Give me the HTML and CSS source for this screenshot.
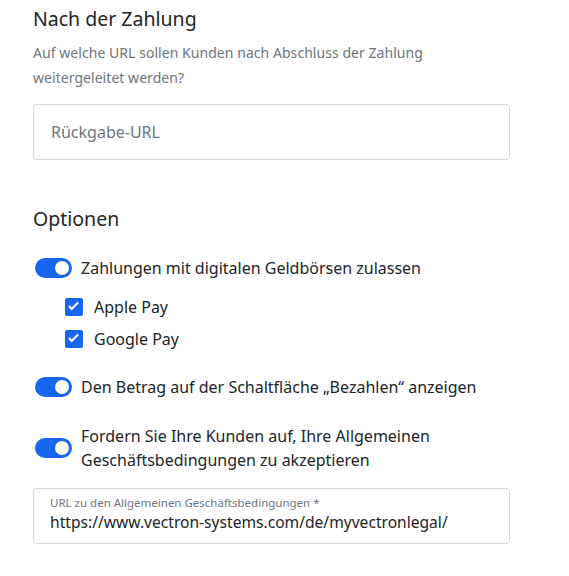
FILE: index.html
```html
<!DOCTYPE html>
<html>
  <head>
    <meta charset="UTF-8" />
    <meta name="viewport" content="width=device-width, initial-scale=1.0" />
    <title>Nach der Zahlung</title>
    <link rel="stylesheet" href="styles.css">
  </head>
  <body>
    <div class="settings">
      <h2 class="section-title">Nach der Zahlung</h2>
      <p class="section-text">Auf welche URL sollen Kunden nach Abschluss der Zahlung weitergeleitet werden?</p>
      <input class="text-field" type="text" placeholder="Rückgabe-URL" />

      <h2 class="section-title options-title">Optionen</h2>

      <label class="switch-row">
        <input type="checkbox" class="switch" checked />
        <span>Zahlungen mit digitalen Geldbörsen zulassen</span>
      </label>
      <div class="check-list">
        <label class="check-row">
          <input type="checkbox" class="check" checked />
          <span>Apple Pay</span>
        </label>
        <label class="check-row">
          <input type="checkbox" class="check" checked />
          <span>Google Pay</span>
        </label>
      </div>

      <label class="switch-row">
        <input type="checkbox" class="switch" checked />
        <span>Den Betrag auf der Schaltfläche „Bezahlen“ anzeigen</span>
      </label>

      <label class="switch-row">
        <input type="checkbox" class="switch" checked />
        <span>Fordern Sie Ihre Kunden auf, Ihre Allgemeinen Geschäftsbedingungen zu akzeptieren</span>
      </label>

      <div class="float-field">
        <label for="terms">URL zu den Allgemeinen Geschäftsbedingungen *</label>
        <input id="terms" type="text" value="https://www.vectron-systems.com/de/myvectronlegal/" />
      </div>
    </div>
  </body>
</html>
```

FILE: styles.css
```css
*,
*::after,
*::before {
  box-sizing: border-box;
}
body {
  margin: 0;
  font-family: 'Noto Sans', sans-serif;
  color: #212529;
  background-color: #fff;
}
.settings {
  width: 477px;
  margin-left: 33px;
  padding-top: 4px;
}
.section-title {
  margin: 0;
  font-size: 19.5px;
  font-weight: 400;
  line-height: 30px;
}
.section-text {
  margin: 6px 0 14px;
  font-size: 14px;
  line-height: 25px;
  letter-spacing: 0.05px;
  color: #6c757d;
}
/* Eingabefeld mit Platzhalter */
.text-field {
  display: block;
  width: 100%;
  height: 56px;
  padding: 0 17px;
  font-family: inherit;
  font-size: 16px;
  color: #212529;
  border: 1px solid #d6d6d6;
  border-radius: 4px;
  outline: none;
}
.text-field::placeholder {
  color: #6c757d;
}
.options-title {
  margin-top: 44px;
  margin-bottom: 22px;
}
/* Schalter */
.switch-row {
  display: flex;
  align-items: center;
  gap: 9px;
  margin-bottom: 25px;
  font-size: 16px;
  line-height: 24px;
}
.switch {
  appearance: none;
  flex: none;
  position: relative;
  width: 37px;
  height: 20px;
  margin: 0 0 0 2px;
  border-radius: 10px;
  background-color: #1766f2;
  cursor: pointer;
}
.switch::after {
  content: '';
  position: absolute;
  top: 3px;
  right: 3px;
  width: 14px;
  height: 14px;
  border-radius: 50%;
  background-color: #fff;
}
/* Checkboxen */
.check-list {
  display: flex;
  flex-direction: column;
  gap: 8px;
  margin: -10px 0 24px 32px;
}
.check-row {
  display: flex;
  align-items: center;
  gap: 11px;
  font-size: 16px;
  line-height: 24px;
}
.check {
  appearance: none;
  flex: none;
  position: relative;
  width: 18px;
  height: 18px;
  margin: 0;
  border-radius: 2px;
  background-color: #1766f2;
}
.check::after {
  content: '';
  position: absolute;
  left: 6px;
  top: 2px;
  width: 5px;
  height: 10px;
  border: solid #fff;
  border-width: 0 2px 2px 0;
  transform: rotate(45deg);
}
/* Feld mit Beschriftung */
.float-field {
  display: flex;
  flex-direction: column;
  height: 56px;
  margin-top: -9px;
  padding: 7px 15px 0 16px;
  border: 1px solid #d6d6d6;
  border-radius: 4px;
}
.float-field label {
  font-size: 11.5px;
  line-height: 14px;
  color: #6c757d;
}
.float-field input {
  padding: 0;
  font-family: inherit;
  font-size: 15.6px;
  line-height: 24px;
  color: #212529;
  border: none;
  outline: none;
}
```
